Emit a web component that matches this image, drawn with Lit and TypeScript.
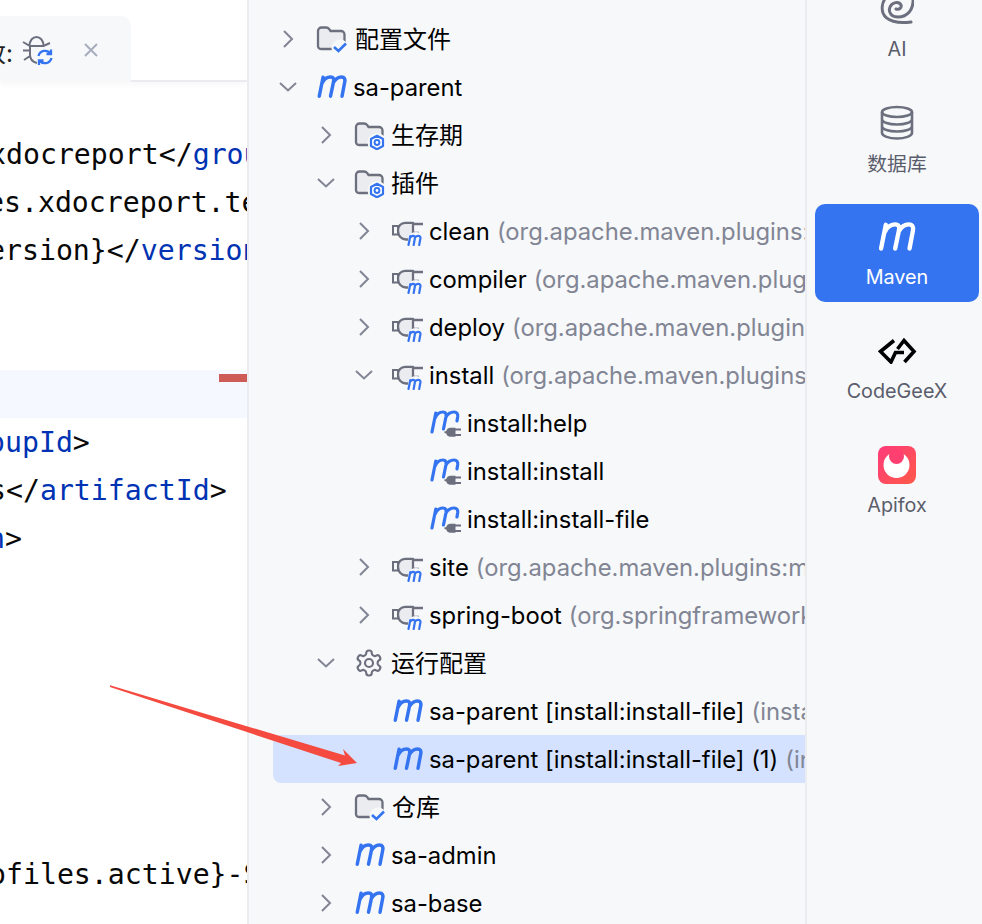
import { LitElement, html, css, svg } from "lit";
import { customElement } from "lit/decorators.js";

const mPath = "M3 19.500 L6.500 2 M5.600 7.500 C7.500 3.300 11 1.700 13.400 1.700 C16 1.700 16.700 3.500 16.200 6 L13.400 19.500 M16 7 C18 3.200 21 1.700 23.500 1.700 C26.300 1.700 27 3.800 26.500 6.300 L24 19.500";

const chevR = html`<svg class="chev" width="20" height="20" viewBox="0 0 20 20"><path d="M6 2 L14 10 L6 18" /></svg>`;
const chevD = html`<svg class="chev" width="20" height="20" viewBox="0 0 20 20"><path d="M2 6 L10 13.500 L18 6" /></svg>`;

const mIcon = html`<svg class="ic" width="32" height="24" viewBox="0 0 29.500 22"><path d=${mPath} fill="none" stroke="#3574f0" stroke-width="3.200" stroke-linecap="round"/></svg>`;

const folderBase = svg`<path d="M2 19.500 V5 a3.500 3.500 0 0 1 3.500-3.500 H10 c1.500 0 2.500 .6 3.300 1.700 L14.500 5 H25 a3.500 3.500 0 0 1 3.500 3.500 V19.500 a3.500 3.500 0 0 1-3.500 3.500 H5 A3 3 0 0 1 2 19.500 Z" fill="#ebecf0" stroke="#6c707e" stroke-width="2.300"/>`;

const folderCheck = html`<svg class="ic" width="34" height="28" viewBox="0 0 34 28">
  <g transform="translate(0 1)">${folderBase}</g>
  <circle cx="24" cy="23" r="8.500" fill="#f7f8fa"/>
  <path d="M18 22 L22.500 26 L30 18.500" fill="none" stroke="#3574f0" stroke-width="2.600"/>
</svg>`;

const folderGear = html`<svg class="ic" width="34" height="30" viewBox="0 0 34 30">
  <g transform="translate(0 2)">${folderBase}</g>
  <circle cx="23" cy="22.500" r="9.500" fill="#f7f8fa"/>
  <path d="M23 15.800 L29 19 V26 L23 29.300 L17 26 V19 Z" fill="#fff" stroke="#3574f0" stroke-width="2.200" stroke-linejoin="round"/>
  <circle cx="23" cy="22.500" r="2.400" fill="none" stroke="#3574f0" stroke-width="2"/>
</svg>`;

const plugin = html`<svg class="ic" width="34" height="30" viewBox="0 0 34 30">
  <path d="M1 10 H6 V18.500 H1 Z" fill="none" stroke="#6c707e" stroke-width="2"/>
  <path d="M21 6.800 H13 C9 6.800 6 10 6 14.500 C6 20 9.500 23.500 14 23.500 H21 Z" fill="#ebecf0" stroke="#6c707e" stroke-width="2.300" stroke-linejoin="round"/>
  <path d="M21 8 H31 M21 17 H27" stroke="#6c707e" stroke-width="2.300"/>
  <circle cx="24" cy="24" r="8" fill="#f7f8fa"/>
  <path d="M16.500 29 L18.300 20 M17.900 22 C19.300 19.700 22.800 19 23 21.500 L21.700 29 M23 21.500 C24.500 19.500 28.500 19 28.500 21.800 L27.200 29" fill="none" stroke="#3574f0" stroke-width="2.200" stroke-linecap="round"/>
</svg>`;

const goal = html`<svg class="ic" width="34" height="30" viewBox="0 0 34 30">
  <path d="M2 24 L5.800 5 M5.200 10 C7 5.500 10.500 4 13 4 C15.800 4 16.400 6 16 8.500 L13.500 21 M15.800 9.500 C17.800 5.500 21 4 24 4 C27 4 28 6.200 27.700 8.500 L27 13" fill="none" stroke="#3574f0" stroke-width="3.200" stroke-linecap="round"/>
  <circle cx="23" cy="24" r="8" fill="#f7f8fa"/>
  <path d="M20.500 19.800 H25.500 V28.700 H20.500 A4.450 4.450 0 0 1 20.500 19.800 Z" fill="#6c707e"/>
  <path d="M14.500 24.200 H17 M25 21.500 H31 M25 27 H31" stroke="#6c707e" stroke-width="2"/>
</svg>`;

const gear = html`<svg class="ic" width="30" height="30" viewBox="0 0 24 24" fill="none" stroke="#6c707e" stroke-width="1.700" stroke-linejoin="round">
  <path d="M12.220 2h-.44a2 2 0 0 0-2 2v.18a2 2 0 0 1-1 1.730l-.43.250a2 2 0 0 1-2 0l-.15-.080a2 2 0 0 0-2.730.730l-.22.380a2 2 0 0 0 .730 2.730l.15.100a2 2 0 0 1 1 1.720v.510a2 2 0 0 1-1 1.740l-.15.090a2 2 0 0 0-.730 2.730l.22.380a2 2 0 0 0 2.730.730l.15-.080a2 2 0 0 1 2 0l.43.250a2 2 0 0 1 1 1.730V20a2 2 0 0 0 2 2h.44a2 2 0 0 0 2-2v-.18a2 2 0 0 1 1-1.730l.43-.25a2 2 0 0 1 2 0l.15.080a2 2 0 0 0 2.730-.730l.22-.390a2 2 0 0 0-.730-2.730l-.15-.080a2 2 0 0 1-1-1.740v-.5a2 2 0 0 1 1-1.740l.15-.090a2 2 0 0 0 .730-2.730l-.22-.380a2 2 0 0 0-2.730-.730l-.15.080a2 2 0 0 1-2 0l-.43-.25a2 2 0 0 1-1-1.730V4a2 2 0 0 0-2-2z"/>
  <circle cx="12" cy="12" r="3.200"/>
</svg>`;

interface Row { level: number; arrow?: "r" | "d"; icon: unknown; name: string; hint?: string; selected?: boolean; cjk?: boolean; dx: number; }

const P = "org.apache.maven.plugins:maven-";
const rows: Row[] = [
  { level: 0, arrow: "r", icon: folderCheck, name: "配置文件", cjk: true, dx: 1 },
  { level: 0, arrow: "d", icon: mIcon, name: "sa-parent", dx: -1 },
  { level: 1, arrow: "r", icon: folderGear, name: "生存期", cjk: true, dx: -1 },
  { level: 1, arrow: "d", icon: folderGear, name: "插件", cjk: true, dx: -1 },
  { level: 2, arrow: "r", icon: plugin, name: "clean", hint: `(${P}clean-plugin:3.2.0)`, dx: -1 },
  { level: 2, arrow: "r", icon: plugin, name: "compiler", hint: `(${P}compiler-plugin:3.11.0)`, dx: -1 },
  { level: 2, arrow: "r", icon: plugin, name: "deploy", hint: `(${P}deploy-plugin:3.1.1)`, dx: -1 },
  { level: 2, arrow: "d", icon: plugin, name: "install", hint: `(${P}install-plugin:3.1.1)`, dx: -1 },
  { level: 3, icon: goal, name: "install:help", dx: -1 },
  { level: 3, icon: goal, name: "install:install", dx: -1 },
  { level: 3, icon: goal, name: "install:install-file", dx: -1 },
  { level: 2, arrow: "r", icon: plugin, name: "site", hint: `(${P}site-plugin:3.12.1)`, dx: -1 },
  { level: 2, arrow: "r", icon: plugin, name: "spring-boot", hint: "(org.springframework.boot:spring-boot-maven-plugin)", dx: -1 },
  { level: 1, arrow: "d", icon: gear, name: "运行配置", cjk: true, dx: -1 },
  { level: 2, icon: mIcon, name: "sa-parent [install:install-file]", hint: "(install:install-file)", dx: -1 },
  { level: 2, icon: mIcon, name: "sa-parent [install:install-file] (1)", hint: "(install:install-file)", selected: true, dx: -1 },
  { level: 1, arrow: "r", icon: folderCheck, name: "仓库", cjk: true, dx: 0 },
  { level: 1, arrow: "r", icon: mIcon, name: "sa-admin", dx: -1 },
  { level: 1, arrow: "r", icon: mIcon, name: "sa-base", dx: -1 },
];

interface Code { shift: number; plain?: string; tag?: string; tail?: string; mark?: boolean; }
const code: Code[] = [
  { shift: -11, plain: "xdocreport</", tag: "groupId", tail: ">" },
  { shift: -13, plain: "es.xdocreport.template" },
  { shift: -12, plain: "ersion}</", tag: "version", tail: ">" },
  { shift: 0 }, { shift: 0 },
  { shift: 0, mark: true },
  { shift: -12, tag: "oupId", tail: ">" },
  { shift: -11, plain: "s</", tag: "artifactId", tail: ">" },
  { shift: -12, tag: "n", tail: ">" },
  { shift: 0 }, { shift: 0 }, { shift: 0 }, { shift: 0 }, { shift: 0 }, { shift: 0 },
  { shift: -11, plain: "ofiles.active}-SNAPSHOT" },
];

@customElement("app-root")
export class AppRoot extends LitElement {
  static styles = css`
    :host { display: block; position: relative; width: 982px; height: 924px; overflow: hidden; background: #fff; font-family: Inter, "Noto Sans CJK SC", sans-serif; }
    .page { display: grid; grid-template-columns: 249px 556px 177px; height: 924px; }
    .editor { overflow: hidden; border-right: 2px solid #ebecf0; box-sizing: border-box; }
    .tabbar { height: 82px; box-sizing: border-box; border-bottom: 2px solid #ebecf0; display: flex; align-items: flex-end; box-shadow: 0 3px 5px rgba(30, 30, 60, 0.03); }
    .tab { width: 131px; height: 66px; margin-bottom: -2px; padding-top: 4px; box-sizing: border-box; background: #f7f8fa; border-top-right-radius: 10px; display: flex; align-items: center; overflow: hidden; font-size: 24px; color: #1e1f22; }
    .tab-label { margin-left: -18px; width: 39px; flex: none; white-space: nowrap; }
    .bug { flex: none; margin-right: 30px; }
    .close { flex: none; margin-bottom: 3px; }
    .code { padding-top: 48px; font-family: "DejaVu Sans Mono", monospace; font-size: 28.200px; color: #080808; }
    .line { height: 48px; line-height: 50px; white-space: pre; display: flex; overflow: hidden; }
    .line.hl { background: #f5f8fe; justify-content: flex-end; }
    .tag { color: #0033b3; }
    .mark { width: 28px; height: 8px; margin-top: 4px; background: #cf5b56; }
    .tree { background: #f7f8fa; overflow: hidden; padding-top: 15px; }
    .row { height: 48px; margin-left: 24px; display: flex; align-items: center; font-size: 23.800px; color: #000; white-space: nowrap; border-radius: 8px 0 0 8px; overflow: hidden; }
    .row.sel { background: #d4e2ff; }
    .slot { width: 38px; flex: none; display: flex; align-items: center; }
    .chev { fill: none; stroke: #818594; stroke-width: 2; }
    .cjk { font-size: 24px; margin-bottom: 3px; }
    .hint { color: #818594; margin-left: 7px; }
    .side { background: #f7f8fa; border-left: 2px solid #ebecf0; overflow: hidden; display: flex; flex-direction: column; gap: 16px; padding: 0 3px 0 8px; }
    .tool { height: 98px; flex: none; border-radius: 10px; display: flex; flex-direction: column; align-items: center; color: #5a5d6b; font-size: 19.800px; line-height: 24px; padding-top: 12px; box-sizing: border-box; }
    .tool:first-child { margin-top: -24px; }
    .tool.on { background: #3574f0; color: #fff; }
    .tool-ic { height: 42px; display: flex; align-items: center; justify-content: center; margin-bottom: 7px; }
    .tool .zh { margin-top: 1px; }
    .arrow { position: absolute; left: 0; top: 0; pointer-events: none; }
  `;

  private renderRow(r: Row) {
    return html`<div class="row ${r.selected ? "sel" : ""}" style="padding-left:${5 + 38 * r.level}px">
      <span class="slot">${r.arrow === "r" ? chevR : r.arrow === "d" ? chevD : ""}</span>
      <span class="slot">${r.icon}</span>
      <span class=${r.cjk ? "cjk" : ""} style="margin-left:${r.dx}px">${r.name}</span>
      ${r.hint ? html`<span class="hint">${r.hint}</span>` : ""}
    </div>`;
  }

  render() {
    return html`
      <div class="page">
        <section class="editor">
          <div class="tabbar">
            <div class="tab">
              <span class="tab-label">改:</span>
              <svg class="bug" width="32" height="32" viewBox="0 0 32 32" fill="none">
                <path d="M8.500 11 C8.500 5 12 2 15.500 2 C19 2 22.500 5 22.500 11 M2 7 L9 11 H22.500 L29 8 M2 15.500 H8 M3 25 L9 21 M9 11 V20 C9 24 12 27 16 28" stroke="#6c707e" stroke-width="2"/>
                <circle cx="24" cy="22" r="8.500" fill="#f7f8fa"/>
                <path d="M17.500 21 A6.800 6.800 0 0 1 29.500 18.500 M30 14.500 V19 H25.500 M30.500 23 A6.800 6.800 0 0 1 18.500 25.500 M18 30 V25.500 H22.500" stroke="#3574f0" stroke-width="2.300"/>
              </svg>
              <svg class="close" width="16" height="16" viewBox="0 0 16 16"><path d="M2 2 L14 14 M14 2 L2 14" stroke="#a8adbd" stroke-width="2"/></svg>
            </div>
          </div>
          <div class="code">
            ${code.map((c) => html`<div class="line ${c.mark ? "hl" : ""}">${c.mark ? html`<i class="mark"></i>` : html`<span style="margin-left:${c.shift}px">${c.plain ?? ""}<span class="tag">${c.tag ?? ""}</span>${c.tail ?? ""}</span>`}</div>`)}
          </div>
        </section>
        <section class="tree">${rows.map((r) => this.renderRow(r))}</section>
        <aside class="side">
          <div class="tool">
            <div class="tool-ic"><svg width="34" height="34" viewBox="0 0 34 34" fill="none" stroke="#6c707e" stroke-width="3" stroke-linecap="round"><path d="M8 3 C3 8 1 15 3 21 C6 29 18 32 31 30 M33 6 C34 18 27 25 18 25 C11 25 8 20 10 15 C12 10 19 9 21 13 C22 16 19 18 16 17"/></svg></div>
            <span>AI</span>
          </div>
          <div class="tool">
            <div class="tool-ic"><svg width="34" height="36" viewBox="0 0 34 36" fill="none" stroke="#6c707e" stroke-width="2.600"><ellipse cx="17" cy="7" rx="15" ry="5"/><path d="M2 7 V28 C2 31 9 33.500 17 33.500 C25 33.500 32 31 32 28 V7 M2 14 C2 17.500 9 19.500 17 19.500 C25 19.500 32 17.500 32 14 M2 21 C2 24.500 9 26.500 17 26.500 C25 26.500 32 24.500 32 21"/></svg></div>
            <span class="zh">数据库</span>
          </div>
          <div class="tool on">
            <div class="tool-ic"><svg width="40" height="30" viewBox="0 0 29.500 22"><path d=${mPath} fill="none" stroke="#fff" stroke-width="3.200" stroke-linecap="round"/></svg></div>
            <span>Maven</span>
          </div>
          <div class="tool">
            <div class="tool-ic"><svg width="40" height="26" viewBox="0 0 40 26" fill="none" stroke="#000" stroke-width="3.600"><path d="M17 2.500 L3.500 13.500 L14 24 L18.500 14.500 H27 M20.500 11 L27 2.500 L37 13.500 L27.500 24"/></svg></div>
            <span>CodeGeeX</span>
          </div>
          <div class="tool">
            <div class="tool-ic"><svg width="38" height="38" viewBox="0 0 38 38"><defs><linearGradient id="fox" x1="0" y1="0" x2="1" y2="1"><stop offset="0" stop-color="#ff3a7c"/><stop offset="1" stop-color="#ff5a48"/></linearGradient></defs><rect width="38" height="38" rx="8" fill="url(#fox)"/><circle cx="18.500" cy="19" r="13" fill="#fff"/><circle cx="18.500" cy="10.500" r="7.500" fill="#ff3f70"/></svg></div>
            <span>Apifox</span>
          </div>
        </aside>
      </div>
      <svg class="arrow" width="982" height="924" viewBox="0 0 982 924"><polygon points="110,685.300 345,755.500 343,749 357,763 338,766 341,763 110,687" fill="#f44a3f"/></svg>
    `;
  }
}
